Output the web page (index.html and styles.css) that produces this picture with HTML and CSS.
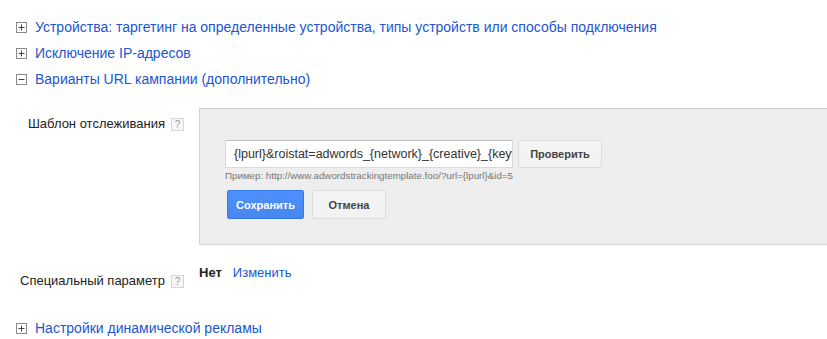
FILE: index.html
```html
<!DOCTYPE html>
<html lang="ru">
<head>
<meta charset="utf-8">
<title>Настройки кампании</title>
<link rel="stylesheet" href="styles.css">
</head>
<body>
<div class="page">
  <div class="section-row">
    <span class="toggle"><svg width="11" height="11" viewBox="0 0 11 11"><rect x="0.5" y="0.5" width="10" height="10" fill="#fff" stroke="#8a8a8a"/><path d="M2.5 5.5h6M5.5 2.5v6" stroke="#444" stroke-width="1"/></svg></span>
    <a class="section-link" href="#">Устройства: таргетинг на определенные устройства, типы устройств или способы подключения</a>
  </div>
  <div class="section-row">
    <span class="toggle"><svg width="11" height="11" viewBox="0 0 11 11"><rect x="0.5" y="0.5" width="10" height="10" fill="#fff" stroke="#8a8a8a"/><path d="M2.5 5.5h6M5.5 2.5v6" stroke="#444" stroke-width="1"/></svg></span>
    <a class="section-link" href="#">Исключение IP-адресов</a>
  </div>
  <div class="section-row">
    <span class="toggle"><svg width="11" height="11" viewBox="0 0 11 11"><rect x="0.5" y="0.5" width="10" height="10" fill="#fff" stroke="#8a8a8a"/><path d="M2.5 5.5h6" stroke="#444" stroke-width="1"/></svg></span>
    <a class="section-link" href="#">Варианты URL кампании (дополнительно)</a>
  </div>

  <div class="field field-template">
    <div class="label">Шаблон отслеживания</div>
    <div class="help"><span class="help-icon">?</span></div>
    <div class="panel">
      <div class="input-row">
        <input class="text-input" type="text" readonly value="{lpurl}&amp;roistat=adwords_{network}_{creative}_{keyword}">
        <button class="btn btn-grey btn-check">Проверить</button>
      </div>
      <div class="example">Пример: http://www.adwordstrackingtemplate.foo/?url={lpurl}&amp;id=5</div>
      <div class="actions">
        <button class="btn btn-blue">Сохранить</button>
        <button class="btn btn-grey btn-cancel">Отмена</button>
      </div>
    </div>
  </div>

  <div class="field field-param">
    <div class="label">Специальный параметр</div>
    <div class="help"><span class="help-icon">?</span></div>
    <div class="value"><b class="value-none">Нет</b><a class="change-link" href="#">Изменить</a></div>
  </div>

  <div class="section-row section-last">
    <span class="toggle"><svg width="11" height="11" viewBox="0 0 11 11"><rect x="0.5" y="0.5" width="10" height="10" fill="#fff" stroke="#8a8a8a"/><path d="M2.5 5.5h6M5.5 2.5v6" stroke="#444" stroke-width="1"/></svg></span>
    <a class="section-link" href="#">Настройки динамической рекламы</a>
  </div>
</div>
</body>
</html>
```

FILE: styles.css
```css
html, body {
  margin: 0;
  padding: 0;
  background: #fff;
  overflow: hidden;
}
body {
  font-family: "Liberation Sans", Arial, sans-serif;
  font-size: 14px;
  color: #222;
}
.page {
  padding-top: 14px;
  width: 827px;
  height: 339px;
  overflow: hidden;
}
.section-row {
  display: flex;
  align-items: center;
  height: 26px;
  padding-left: 16px;
}
.toggle {
  display: flex;
  width: 11px;
  height: 11px;
  margin-right: 8px;
}
.section-link {
  color: #2156cf;
  text-decoration: none;
  font-size: 14px;
  white-space: nowrap;
}
.field {
  display: grid;
  grid-template-columns: 165px 34px 1fr;
  align-items: start;
}
.field-template {
  margin-top: 16px;
}
.label {
  text-align: right;
  font-size: 13px;
  color: #222;
  white-space: nowrap;
}
.field-template .label {
  padding-top: 8px;
}
.help {
  padding-left: 6px;
}
.field-template .help {
  padding-top: 10px;
}
.help-icon {
  display: flex;
  align-items: center;
  justify-content: center;
  width: 11px;
  height: 11px;
  border: 1px solid #d6d6d6;
  background: #f6f6f6;
  color: #999;
  font-size: 10px;
  line-height: 1;
}
.panel {
  background: #eeeeee;
  border: 1px solid #d4d4d4;
  border-top-color: #c8c8c8;
  border-right: none;
  margin-right: -20px;
  padding: 31px 0 25px 25px;
  height: 79px;
}
.input-row {
  display: flex;
  align-items: center;
}
.text-input {
  box-sizing: border-box;
  width: 288px;
  height: 28px;
  margin: 0;
  background: #fff;
  border: 1px solid #d9d9d9;
  border-top-color: #c0c0c0;
  border-radius: 0;
  padding: 0 0 0 8px;
  font-family: "Liberation Sans", Arial, sans-serif;
  font-size: 12.5px;
  color: #333;
  outline: none;
}
.btn {
  box-sizing: border-box;
  font-family: "Liberation Sans", Arial, sans-serif;
  font-weight: bold;
  font-size: 11px;
  border-radius: 2px;
  padding: 0;
  cursor: pointer;
}
.btn-grey {
  background: linear-gradient(#f5f5f5, #f1f1f1);
  border: 1px solid #dcdcdc;
  color: #444;
}
.btn-check {
  margin-left: 5px;
  width: 84px;
  height: 28px;
}
.example {
  font-size: 9.75px;
  color: #777;
  margin-top: 2px;
  line-height: 12px;
  white-space: nowrap;
}
.actions {
  display: flex;
  margin-top: 8px;
  margin-left: 2px;
  gap: 8px;
}
.btn-blue {
  width: 77px;
  height: 29px;
  background: linear-gradient(#4d90fe, #4787ed);
  border: 1px solid #3079ed;
  color: #fff;
}
.btn-cancel {
  width: 74px;
  height: 29px;
}
.field-param {
  margin-top: 20px;
}
.field-param .label {
  padding-top: 8px;
}
.field-param .help {
  padding-top: 10px;
}
.value {
  display: flex;
  align-items: baseline;
  font-size: 13px;
}
.value-none {
  color: #222;
  font-weight: bold;
}
.change-link {
  color: #2156cf;
  text-decoration: none;
  margin-left: 11px;
}
.section-last {
  margin-top: 27px;
}
```
